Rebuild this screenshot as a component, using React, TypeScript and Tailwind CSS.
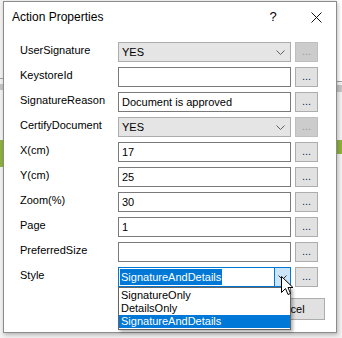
import React from "react";

// label + kind of field for each row of the properties form
type Row = {
  label: string;
  kind: "combo" | "text" | "style";
  value?: string;
  disabledBtn?: boolean;
};

const rows: Row[] = [
  { label: "UserSignature", kind: "combo", value: "YES", disabledBtn: true },
  { label: "KeystoreId", kind: "text", value: "" },
  { label: "SignatureReason", kind: "text", value: "Document is approved" },
  { label: "CertifyDocument", kind: "combo", value: "YES", disabledBtn: true },
  { label: "X(cm)", kind: "text", value: "17" },
  { label: "Y(cm)", kind: "text", value: "25" },
  { label: "Zoom(%)", kind: "text", value: "30" },
  { label: "Page", kind: "text", value: "1" },
  { label: "PreferredSize", kind: "text", value: "" },
  { label: "Style", kind: "style", value: "SignatureAndDetails" },
];

const styleOptions = ["SignatureOnly", "DetailsOnly", "SignatureAndDetails"];

function Chevron({ color = "#606060" }: { color?: string }) {
  return (
    <svg width="9" height="5" viewBox="0 0 9 5" fill="none">
      <path d="M0.5 0.5 L4.5 4.5 L8.5 0.5" stroke={color} strokeWidth="1" />
    </svg>
  );
}

function DotsButton({ disabled }: { disabled?: boolean }) {
  return (
    <div
      className={`w-[23px] h-[20px] shrink-0 flex items-center justify-center border text-[11px] leading-none pb-[2px] ${
        disabled
          ? "bg-[#cccccc] border-[#bfbfbf] text-[#9a9a9a]"
          : "bg-[#e1e1e1] border-[#adadad] text-[#1a1a6e]"
      }`}
    >
      ...
    </div>
  );
}

function Field({ row }: { row: Row }) {
  if (row.kind === "combo") {
    return (
      <div className="w-[173px] h-[20px] flex items-center border border-[#acacac] bg-[#e5e5e5] pl-[3px] pr-[5px]">
        <span className="flex-1">{row.value}</span>
        <Chevron />
      </div>
    );
  }
  if (row.kind === "style") {
    return (
      <div className="w-[173px] h-[20px] flex items-stretch border border-[#0078d7] bg-white">
        <div className="flex-1 flex items-center pl-[1px]">
          <span className="bg-[#0078d7] text-white px-[1px] h-[16px] flex items-center">
            {row.value}
          </span>
        </div>
        <div className="w-[16px] bg-[#cce4f7] border-l border-[#0078d7] flex items-center justify-center">
          <Chevron color="#333" />
        </div>
      </div>
    );
  }
  return (
    <div className="w-[173px] h-[20px] flex items-center border border-[#7a7a7a] bg-white pl-[3px]">
      {row.value}
    </div>
  );
}

export default function App() {
  return (
    <div className="relative w-[342px] h-[338px] overflow-hidden bg-[#f2f2f2] font-['Liberation_Sans',Arial,sans-serif] text-[11px] text-black">
      {/* background app peeking out behind the dialog */}
      <div className="absolute right-0 top-0 w-[6px] h-[81px] bg-white" />
      <div className="absolute right-0 top-[81px] w-[6px] h-[1px] bg-[#a0a0a0]" />
      <div className="absolute right-0 top-[85px] w-[6px] h-[7px] bg-[#c4c4c4]" />
      <div className="absolute right-0 top-[140px] w-[6px] h-[14px] bg-[#8db33a]" />
      <div className="absolute left-0 top-[78px] w-[3px] h-[1px] bg-[#a0a0a0]" />
      <div className="absolute left-0 top-[84px] w-[3px] h-[6px] bg-[#c4c4c4]" />
      <div className="absolute left-0 top-[140px] w-[3px] h-[27px] bg-[#8db33a]" />

      {/* dialog window */}
      <div className="relative ml-[3px] mt-[1px] w-[334px] h-[332px] bg-white border border-[#8c8c8c] shadow-[1px_2px_4px_rgba(0,0,0,0.25)]">
        {/* title bar */}
        <div className="h-[30px] flex items-center pl-[8px] text-[12px]">
          <span className="flex-1">Action Properties</span>
          <span className="w-[10px] text-center text-[13px] mr-[33px]">?</span>
          <svg width="11" height="11" viewBox="0 0 11 11" className="mr-[14px]">
            <path d="M0.5 0.5 L10.5 10.5 M10.5 0.5 L0.5 10.5" stroke="#111" strokeWidth="1" />
          </svg>
        </div>

        {/* form */}
        <div className="pt-[10px] pl-[16px] flex flex-col gap-[5px]">
          {rows.map((row) => (
            <div key={row.label} className="flex items-start h-[20px]">
              <div className="w-[98px] leading-[14px] pt-[1px]">{row.label}</div>
              <Field row={row} />
              <div className="ml-[4px]">
                <DotsButton disabled={row.disabledBtn} />
              </div>
            </div>
          ))}
        </div>

        {/* bottom buttons */}
        <div className="mt-[11px] flex justify-end gap-[6px] pr-[11px]">
          <div className="w-[75px] h-[22px] flex items-center justify-center border border-[#adadad] bg-[#e1e1e1]">
            OK
          </div>
          <div className="w-[75px] h-[22px] flex items-center justify-center border border-[#adadad] bg-[#e1e1e1]">
            Cancel
          </div>
        </div>

        {/* open dropdown list of the Style combobox */}
        <div className="absolute left-[114px] top-[285px] w-[173px] h-[43px] border border-[#646464] bg-white pt-[1px] shadow-[2px_2px_3px_rgba(0,0,0,0.3)]">
          {styleOptions.map((opt) => (
            <div
              key={opt}
              className={`h-[13px] leading-[13px] pl-[2px] ${
                opt === "SignatureAndDetails" ? "bg-[#0078d7] text-white" : ""
              }`}
            >
              {opt}
            </div>
          ))}
        </div>

        {/* mouse pointer */}
        <svg
          width="13"
          height="20"
          viewBox="0 0 13 20"
          className="absolute left-[277px] top-[274px]"
        >
          <path
            d="M0.5 0.5 L0.5 16.5 L4.5 12.5 L7 18.5 L9.5 17.5 L7 11.5 L12 11.5 Z"
            fill="white"
            stroke="black"
            strokeWidth="1"
          />
        </svg>
      </div>
    </div>
  );
}
